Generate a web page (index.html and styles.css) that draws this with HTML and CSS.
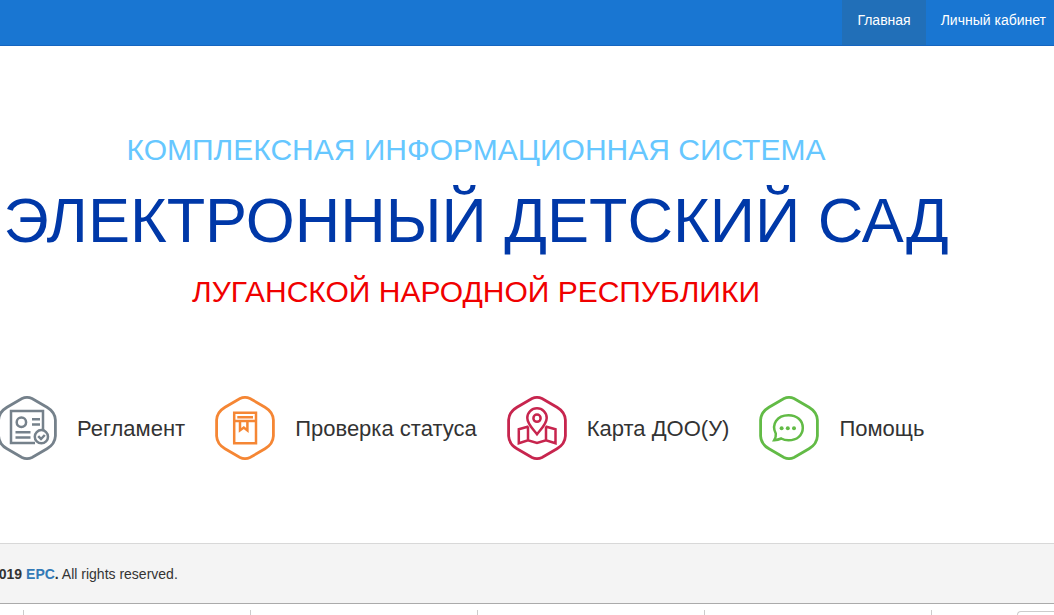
FILE: index.html
```html
<!DOCTYPE html>
<html lang="ru">
<head>
<meta charset="utf-8">
<title>Электронный детский сад</title>
<link rel="stylesheet" href="styles.css">
</head>
<body>
<header class="topbar">
  <nav class="nav">
    <a class="nav-link active" href="#">Главная</a>
    <a class="nav-link" href="#">Личный кабинет</a>
  </nav>
</header>
<main class="main">
  <h1 class="hero">
    <span class="hero-sub">КОМПЛЕКСНАЯ ИНФОРМАЦИОННАЯ СИСТЕМА</span>
    <span class="hero-title">ЭЛЕКТРОННЫЙ ДЕТСКИЙ САД</span>
    <span class="hero-sub region">ЛУГАНСКОЙ НАРОДНОЙ РЕСПУБЛИКИ</span>
  </h1>
  <div class="services">
    <a class="service" href="#">
      <svg class="icon gray" viewBox="0 0 60 64">
        <path class="hex" d="M25 2.5Q30 .3 35 2.5L50 11.2Q58 16 58.4 24V40Q58 48 50 52.8L35 61.5Q30 63.7 25 61.5L10 52.8Q2 48 1.6 40V24Q2 16 10 11.2Z"/>
        <path d="M38 47H14V15H46V34M35 23.3H43M35 28.5H43M18.5 36.3H33.5M18.5 41.5H33.5"/>
        <circle cx="24.4" cy="26.3" r="4.7"/>
        <circle cx="44.4" cy="40.7" r="6.6"/>
        <path d="M41.2 40.2L44 43L47.8 39"/>
      </svg>
      <span>Регламент</span>
    </a>
    <a class="service" href="#">
      <svg class="icon orange" viewBox="0 0 60 64">
        <path class="hex" d="M25 2.5Q30 .3 35 2.5L50 11.2Q58 16 58.4 24V40Q58 48 50 52.8L35 61.5Q30 63.7 25 61.5L10 52.8Q2 48 1.6 40V24Q2 16 10 11.2Z"/>
        <path d="M19.2 16.8H41V47.3H19.2ZM19.2 25H41M22.3 21.2H38M25 25V34.4L28.8 31.6L32.4 34.4V25"/>
      </svg>
      <span>Проверка статуса</span>
    </a>
    <a class="service" href="#">
      <svg class="icon crimson" viewBox="0 0 60 64">
        <path class="hex" d="M25 2.5Q30 .3 35 2.5L50 11.2Q58 16 58.4 24V40Q58 48 50 52.8L35 61.5Q30 63.7 25 61.5L10 52.8Q2 48 1.6 40V24Q2 16 10 11.2Z"/>
        <path d="M30 38.2C26 33 20.3 28 20.3 22A9.7 9.7 0 0 1 39.7 22C39.7 28 34 33 30 38.2Z"/>
        <circle cx="30" cy="22.2" r="3.6"/>
        <path d="M21.5 30.5L11.8 33.3V47.3L21 44.2L30 47L39 44.2L48.5 47.3V33.3L38.5 30.5M21 30.5V44.2M39 30.5V44.2"/>
      </svg>
      <span>Карта ДОО(У)</span>
    </a>
    <a class="service" href="#">
      <svg class="icon green" viewBox="0 0 60 64">
        <path class="hex" d="M25 2.5Q30 .3 35 2.5L50 11.2Q58 16 58.4 24V40Q58 48 50 52.8L35 61.5Q30 63.7 25 61.5L10 52.8Q2 48 1.6 40V24Q2 16 10 11.2Z"/>
        <path d="M15.2 44.2Q17.2 40.7 16.8 37.6C12 28.5 18 19.3 29.5 19.3C38 19.3 43.8 24.5 43.8 31.8C43.8 39.2 38 44.3 29.5 44.3Q25.5 44.3 22.2 42.5Q19 44 15.2 44.2Z"/>
        <g class="dots"><circle cx="22.6" cy="32.2" r="2"/><circle cx="28.8" cy="32.2" r="2"/><circle cx="35" cy="32.2" r="2"/></g>
      </svg>
      <span>Помощь</span>
    </a>
  </div>
</main>
<footer class="footer">
  <p class="copyright"><strong>2019 <a href="#">EPC</a>.</strong> All rights reserved.</p>
</footer>
<div class="strip">
  <span class="tick"></span><span class="tick"></span><span class="tick"></span><span class="tick"></span><span class="tick"></span>
  <span class="panel"></span>
</div>
</body>
</html>
```
FILE: styles.css
```css
* { box-sizing: border-box; }
body {
  margin: 0;
  overflow: hidden;
  background: #fff;
  color: #333;
  font: 14px/20px "Liberation Sans", Arial, sans-serif;
}
a { text-decoration: none; }
.topbar {
  overflow: hidden;
  background: #1976d2;
  border-bottom: 1px solid #1565c0;
}
.nav {
  display: flex;
  justify-content: flex-end;
  margin-right: -7px;
}
.nav-link {
  padding: 10px 15px 15px;
  color: #fff;
  white-space: nowrap;
}
.nav-link.active { background: #216fb8; }
.main { padding: 82px 0 83px; }
.hero {
  display: flex;
  flex-direction: column;
  align-items: center;
  margin: 0 102px 0 0;
  font-weight: 400;
  white-space: nowrap;
}
.hero-sub {
  color: #66c7ff;
  font-size: 30px;
  line-height: 44px;
}
.hero-title {
  padding-bottom: 2px;
  color: #0038a8;
  font-size: 63px;
  line-height: 96px;
}
.hero-sub.region { color: #f00000; }
.services {
  display: flex;
  gap: 30px;
  margin: 82px 0 0 -3px;
}
.service {
  display: flex;
  align-items: center;
  gap: 20px;
  color: #333;
  font-size: 22px;
  line-height: 32px;
  white-space: nowrap;
}
.service span { padding-top: 2px; }
.icon {
  width: 60px;
  height: 64px;
  fill: none;
  stroke: currentColor;
  stroke-width: 2.5;
}
.hex { stroke-width: 2.8; }
.dots { fill: currentColor; stroke: none; }
.gray { color: #75818b; }
.orange { color: #f58634; }
.crimson { color: #c7254e; }
.green { color: #62bb46; }
.footer {
  padding: 20px 0 19px;
  background: #f4f4f4;
  border-top: 1px solid #d8d8d8;
  border-bottom: 1px solid #aaa;
}
.copyright { margin: 0 0 0 -9px; }
.copyright a { color: #337ab7; }
.strip {
  display: grid;
  grid-template-columns: 24px repeat(4, 227px) 1fr;
  padding-top: 6px;
}
.tick {
  height: 20px;
  border-right: 1px solid #ccc;
}
.panel {
  height: 20px;
  margin: 1px 0 0 85px;
  border: 1px solid #ccc;
  border-right: 0;
  border-radius: 4px 0 0;
}
```
